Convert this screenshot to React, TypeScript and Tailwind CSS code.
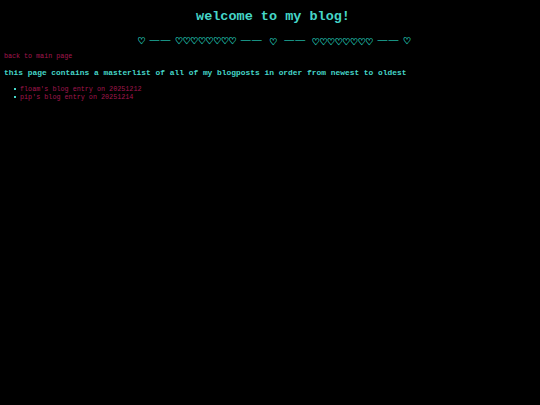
import React from "react";

export default function App() {
  const mono = { fontFamily: '"Liberation Mono", "Courier New", monospace' };
  const sym = { fontFamily: '"DejaVu Sans", sans-serif' };
  const Hearts = ({ n }: { n: number }) => (
    <span className="text-[9.2px] tracking-[-0.6px] [-webkit-text-stroke:0.35px]">{"♡".repeat(n)}</span>
  );
  const Dash = () => <span className="relative top-[-1px] text-[11px]">——</span>;
  return (
    <div className="min-h-[405px] w-[540px] bg-black" style={mono}>
      <h1 className="pt-[9px] pl-[6px] text-center text-[13.5px] font-bold leading-[16px] text-[#45d6c8]">
        welcome to my blog!
      </h1>
      <div
        className="mt-[8px] flex items-center justify-center gap-[4px] pl-[8px] leading-[14px] text-[#1fb3a0]"
        style={sym}
      >
        <Hearts n={1} />
        <Dash />
        <Hearts n={8} />
        <Dash />
        <span className="px-[3px]"><Hearts n={1} /></span>
        <Dash />
        <span className="pl-[2px]"><Hearts n={8} /></span>
        <Dash />
        <Hearts n={1} />
      </div>
      <div className="mt-[2px] pl-[4px] text-[6.7px] leading-[10px]">
        <a className="text-[#a3174f]">back to main page</a>
      </div>
      <p className="mt-[6px] pl-[4px] text-[7.9px] font-bold leading-[12px] text-[#45d6c8]">
        this page contains a masterlist of all of my blogposts in order from newest to oldest
      </p>
      <ul className="mt-[6px] pl-[14px] text-[6.75px] leading-[8px]">
        <li className="flex items-center gap-[4px]">
          <span className="inline-block h-[2px] w-[2px] bg-[#45d6c8]" />
          <a className="text-[#a3174f]">floam's blog entry on 20251212</a>
        </li>
        <li className="flex items-center gap-[4px]">
          <span className="inline-block h-[2px] w-[2px] bg-[#45d6c8]" />
          <a className="text-[#a3174f]">pip's blog entry on 20251214</a>
        </li>
      </ul>
    </div>
  );
}
